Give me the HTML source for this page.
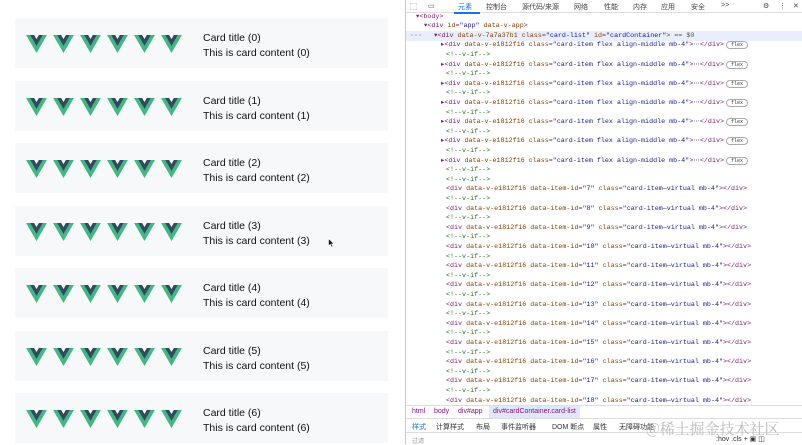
<!DOCTYPE html>
<html><head><meta charset="utf-8"><style>
*{margin:0;padding:0;box-sizing:border-box}
body{width:802px;height:444px;overflow:hidden;background:#fff;font-family:"Liberation Sans","Noto Sans CJK SC",sans-serif;position:relative}
.left{position:absolute;left:0;top:0;width:405px;height:444px;background:#fff}
.card{position:absolute;left:15px;width:373px;height:50px;background:#f7f8fa}
.logos{position:absolute;left:11px;top:17px}
.logos svg{position:absolute;top:0;width:21px;height:18px}
.t{position:absolute;left:188px;font-size:10.5px;color:#111;line-height:15px}
.dev{position:absolute;left:405px;top:0;width:397px;height:444px;border-left:1px solid #ccc;background:#fff;font-family:"Liberation Mono",monospace;font-size:6.7px}
.tabs{position:absolute;left:0;top:0;width:397px;height:13px;border-bottom:1px solid #ddd;font-family:"Liberation Sans","Noto Sans CJK SC",sans-serif;font-size:7px;color:#444}
.tabs span{position:absolute;top:2px}
.row{position:absolute;white-space:pre;color:#7a1a72;line-height:9.6px;height:9.6px}
.an{color:#8a4200}.av{color:#1a1a96}.cm{color:#236e25}
.badge{display:inline-block;border:1px solid #aaa;border-radius:5px;font-size:5px;padding:0 4px;line-height:6px;color:#333;margin-left:2px}
.bc{position:absolute;left:0;top:405px;width:397px;height:12px;border-top:1px solid #ddd;font-family:"Liberation Sans",sans-serif;font-size:7px;color:#881280}
.bt{position:absolute;left:0;top:418px;width:397px;height:15px;border-top:1px solid #ddd;border-bottom:1px solid #ddd;font-family:"Liberation Sans","Noto Sans CJK SC",sans-serif;font-size:7px;color:#333}
</style></head><body>
<div class="left" id="left"></div>
<svg style="position:absolute;left:328px;top:238px" width="7" height="10" viewBox="0 0 7 10"><path d="M0.5 0.5 L0.5 8 L2.3 6.3 L3.6 9.3 L4.8 8.8 L3.6 5.9 L6 5.9 Z" fill="#111" stroke="#fff" stroke-width="0.6"/></svg>
<div class="dev" id="dev">
<div class="tabs">
<span style="left:4px">⬚</span><span style="left:22px">▭</span>
<span style="left:52px;color:#1a73e8">元素</span><span style="left:80px">控制台</span><span style="left:116px">源代码/来源</span><span style="left:168px">网络</span><span style="left:198px">性能</span><span style="left:227px">内存</span><span style="left:255px">应用</span><span style="left:285px">安全</span><span style="left:315px">&gt;&gt;</span>
<span style="left:357px">⚙</span><span style="left:373px">⋮</span><span style="left:387px">✕</span>
<div style="position:absolute;left:48px;top:12px;width:26px;height:2px;background:#1a73e8"></div>
</div>
<div style="position:absolute;left:0;top:31px;width:397px;height:10px;background:#e8eefb"></div>
<div id="rows"></div>
<div class="bc"><span style="position:absolute;left:6px;top:2px">html</span><span style="position:absolute;left:28px;top:2px">body</span><span style="position:absolute;left:52px;top:2px">div#app</span><span style="position:absolute;left:83px;top:0;height:12px;padding:2px 4px;background:#dfe8fb">div#cardContainer.card-list</span></div>
<div class="bt"><span style="position:absolute;left:6px;top:3px;color:#1a73e8">样式</span><span style="position:absolute;left:30px;top:3px">计算样式</span><span style="position:absolute;left:70px;top:3px">布局</span><span style="position:absolute;left:95px;top:3px">事件监听器</span><span style="position:absolute;left:146px;top:3px">DOM 断点</span><span style="position:absolute;left:187px;top:3px">属性</span><span style="position:absolute;left:213px;top:3px">无障碍功能</span><span style="position:absolute;left:240px;top:-1px;font-size:15px;color:#bbb;font-family:'Noto Serif CJK SC',serif">@稀土掘金技术社区</span></div>
<div style="position:absolute;left:6px;top:436px;font-size:6px;color:#999;font-family:'Noto Sans CJK SC',sans-serif">过滤</div>
<div style="position:absolute;left:310px;top:435px;font-size:7px;color:#333;font-family:'Liberation Sans',sans-serif">:hov .cls + ▣ ◫</div>
</div>
<script>
var v='<svg viewBox="0 0 256 221"><path d="M204.8 0H256L128 220.8 0 0h97.92L128 51.2 157.44 0h47.36Z" fill="#41B883"/><path d="M50.56 0 128 133.12 204.8 0h-47.36L128 51.2 97.92 0H50.56Z" fill="#35495E"/></svg>';
var h='';
for(var i=0;i<7;i++){var tp=18+i*62.5;var lg='';for(var j=0;j<6;j++)lg+=v.replace('<svg','<svg style="left:'+(j*27)+'px"');
h+='<div class="card" style="top:'+tp+'px"><div class="logos">'+lg+'</div><div class="t" style="top:13px">Card title ('+i+')<br>This is card content ('+i+')</div></div>';}
document.getElementById('left').innerHTML=h;
var r='',yy=12.5;
function row(x,s){r+='<div class="row" style="left:'+x+'px;top:'+yy+'px">'+s+'</div>';yy+=9.6;}
row(10,'▾&lt;body&gt;');
row(18,'▾&lt;div <span class="an">id</span>=<span class="av">"app"</span> <span class="an">data-v-app</span>&gt;');
row(4,'<span style="color:#555">···</span>   ▾&lt;div <span class="an">data-v-7a7a37b1</span> <span class="an">class</span>=<span class="av">"card-list"</span> <span class="an">id</span>=<span class="av">"cardContainer"</span>&gt; <span style="color:#555">== $0</span>');
for(var k=0;k<7;k++){row(35,'▸&lt;div <span class="an">data-v-e1812f16</span> <span class="an">class</span>=<span class="av">"card-item flex align-middle mb-4"</span>&gt;<span style="color:#555">⋯</span>&lt;/div&gt;<span class="badge">flex</span>');row(40,'<span class="cm">&lt;!--v-if--&gt;</span>');}
row(40,'<span class="cm">&lt;!--v-if--&gt;</span>');
for(var k=7;k<=18;k++){row(40,'&lt;div <span class="an">data-v-e1812f16</span> <span class="an">data-item-id</span>=<span class="av">"'+k+'"</span> <span class="an">class</span>=<span class="av">"card-item—virtual mb-4"</span>&gt;&lt;/div&gt;');if(k<18)row(40,'<span class="cm">&lt;!--v-if--&gt;</span>');}
document.getElementById('rows').innerHTML=r;
</script>
</body></html>
